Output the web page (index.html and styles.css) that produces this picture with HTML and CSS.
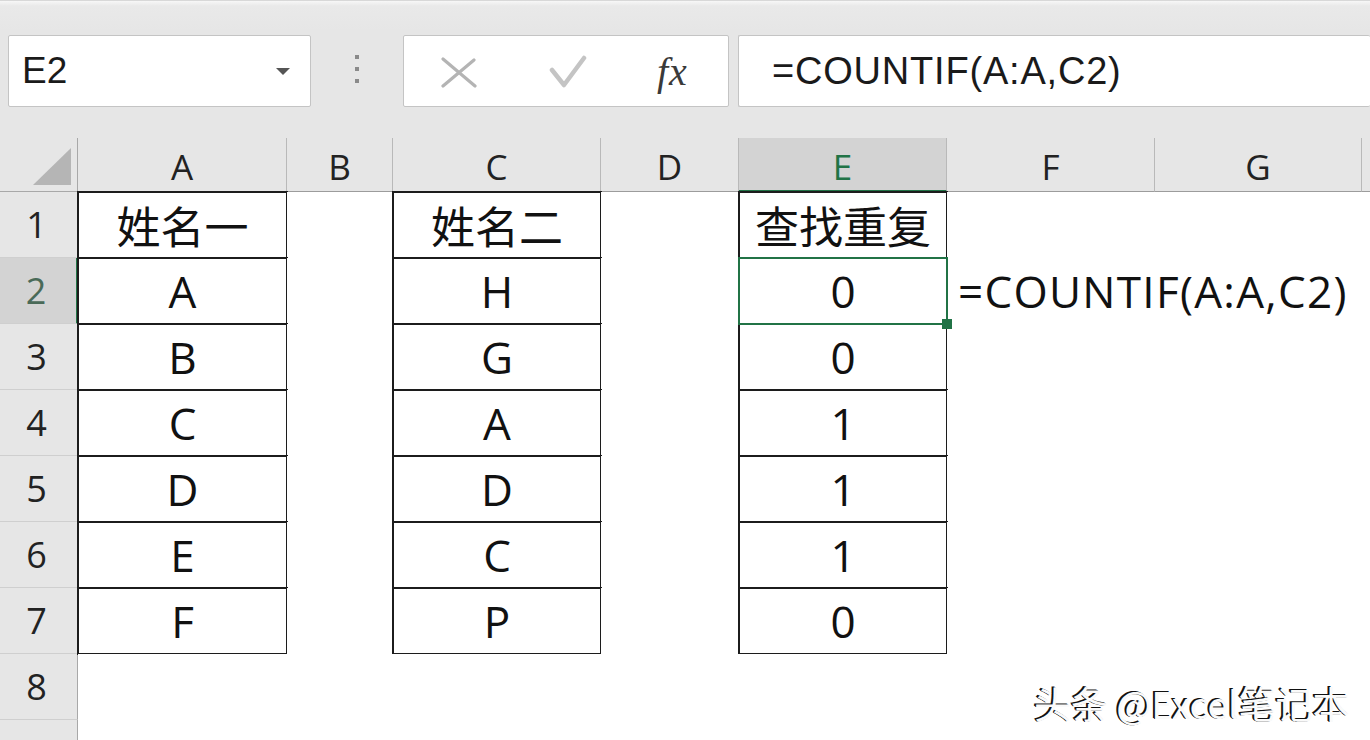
FILE: index.html
```html
<!DOCTYPE html>
<html>
<head>
<meta charset="utf-8">
<link rel="stylesheet" href="styles.css">
</head>
<body>
<div class="toolbar">
  <div class="namebox">
    <span class="name">E2</span>
    <span class="caret"></span>
  </div>
  <div class="grip"><i></i><i></i><i></i></div>
  <div class="buttons">
    <svg class="ico-x" width="36" height="32" viewBox="0 0 36 32"><path d="M2 2 L34 29 M33 3 L2 29" stroke="#b4b4b4" stroke-width="3.2" stroke-linecap="round" fill="none"/></svg>
    <svg class="ico-ok" width="38" height="34" viewBox="0 0 38 34"><path d="M3 15 L15 30 L35 3" stroke="#c4c4c4" stroke-width="4.5" stroke-linecap="round" stroke-linejoin="round" fill="none"/></svg>
    <span class="fx">fx</span>
  </div>
  <div class="formula">=COUNTIF(A:A,C2)</div>
</div>
<div class="sheet">
  <div class="corner"><span class="tri"></span></div>
  <div class="ch">A</div>
  <div class="ch">B</div>
  <div class="ch">C</div>
  <div class="ch">D</div>
  <div class="ch sel">E</div>
  <div class="ch">F</div>
  <div class="ch">G</div>
  <div class="ch last"></div>

  <div class="rh">1</div>
  <div class="c b">姓名一</div><div class="c"></div><div class="c b">姓名二</div><div class="c"></div><div class="c b">查找重复</div><div class="c"></div><div class="c"></div><div class="c"></div>

  <div class="rh sel">2</div>
  <div class="c b">A</div><div class="c"></div><div class="c b">H</div><div class="c"></div><div class="c b active">0<span class="handle"></span></div><div class="c left">=COUNTIF(A:A,C2)</div><div class="c"></div><div class="c"></div>

  <div class="rh">3</div>
  <div class="c b">B</div><div class="c"></div><div class="c b">G</div><div class="c"></div><div class="c b">0</div><div class="c"></div><div class="c"></div><div class="c"></div>

  <div class="rh">4</div>
  <div class="c b">C</div><div class="c"></div><div class="c b">A</div><div class="c"></div><div class="c b">1</div><div class="c"></div><div class="c"></div><div class="c"></div>

  <div class="rh">5</div>
  <div class="c b">D</div><div class="c"></div><div class="c b">D</div><div class="c"></div><div class="c b">1</div><div class="c"></div><div class="c"></div><div class="c"></div>

  <div class="rh">6</div>
  <div class="c b">E</div><div class="c"></div><div class="c b">C</div><div class="c"></div><div class="c b">1</div><div class="c"></div><div class="c"></div><div class="c"></div>

  <div class="rh">7</div>
  <div class="c b">F</div><div class="c"></div><div class="c b">P</div><div class="c"></div><div class="c b">0</div><div class="c"></div><div class="c"></div><div class="c"></div>

  <div class="rh">8</div>
  <div class="c"></div><div class="c"></div><div class="c"></div><div class="c"></div><div class="c"></div><div class="c"></div><div class="c"></div><div class="c"></div>

  <div class="rh"></div>
  <div class="c"></div><div class="c"></div><div class="c"></div><div class="c"></div><div class="c"></div><div class="c"></div><div class="c"></div><div class="c"></div>
</div>
<div class="watermark">头条 @Excel笔记本</div>
</body>
</html>
```
FILE: styles.css
```css
html, body {
  margin: 0;
  padding: 0;
  width: 1370px;
  height: 740px;
  overflow: hidden;
  background: #e6e6e6;
  font-family: "Open Sans", "Noto Sans CJK SC", sans-serif;
  position: relative;
}

.toolbar {
  height: 138px;
  box-sizing: border-box;
  padding-top: 34px;
  padding-left: 8px;
  display: flex;
  align-items: flex-start;
  background: linear-gradient(#f7f7f7 0, #e9e9e9 5px, #e6e6e6 30px);
  border-top: 1px solid #d8d8d8;
}

.namebox, .buttons, .formula {
  height: 72px;
  box-sizing: border-box;
  background: #fff;
  border: 1px solid #c4c4c4;
  border-radius: 2px;
  display: flex;
  align-items: center;
}

.namebox {
  width: 303px;
  padding-left: 13px;
  justify-content: space-between;
  padding-right: 20px;
}

.name {
  font-family: "Liberation Sans", Arial, sans-serif;
  font-size: 37px;
  color: #1a1a1a;
}

.caret {
  width: 0;
  height: 0;
  border-left: 7px solid transparent;
  border-right: 7px solid transparent;
  border-top: 7px solid #555;
}

.grip {
  width: 92px;
  display: flex;
  flex-direction: column;
  align-items: center;
  gap: 8px;
  padding-top: 20px;
}

.grip i {
  display: block;
  width: 4px;
  height: 4px;
  background: #8a8a8a;
}

.buttons {
  width: 326px;
  padding-left: 37px;
}

.ico-x { margin-top: 4px; }
.ico-ok { margin-left: 72px; margin-top: 2px; }

.fx {
  margin-left: 70px;
  font-family: "Liberation Serif", "Times New Roman", serif;
  font-style: italic;
  font-size: 40px;
  color: #3a3a3a;
  letter-spacing: 1px;
}

.formula {
  margin-left: 9px;
  flex: 1;
  border-right: none;
  padding-left: 33px;
  font-family: "Liberation Sans", Arial, sans-serif;
  font-size: 38px;
  letter-spacing: 0.8px;
  color: #1a1a1a;
}

.sheet {
  display: grid;
  grid-template-columns: 78px 209px 106px 208px 138px 208px 208px 207px 8px;
  grid-template-rows: 54px repeat(9, 66px);
  background: #fff;
}

.corner, .ch, .rh {
  background: #e6e6e6;
  box-sizing: border-box;
  display: flex;
  align-items: center;
  justify-content: center;
  color: #222;
}

.corner {
  border-right: 1px solid #a8a8a8;
  border-bottom: 1px solid #a8a8a8;
  justify-content: flex-end;
  align-items: flex-end;
  padding: 0 6px 6px 0;
}

.tri {
  width: 0;
  height: 0;
  border-left: 38px solid transparent;
  border-bottom: 37px solid #b5b5b5;
}

.ch {
  font-size: 35px;
  border-right: 1px solid #b9b9b9;
  border-bottom: 1px solid #9c9c9c;
  padding-top: 4px;
}

.ch.last {
  border-right: none;
}

.ch.sel {
  background: #d3d3d3;
  color: #217346;
  border-bottom: 2px solid #217346;
}

.rh {
  font-size: 36px;
  border-right: 1px solid #a8a8a8;
  border-bottom: 1px solid #cfcfcf;
  padding-right: 4px;
}

.rh.sel {
  background: #d3d3d3;
  color: #4a6a58;
  border-right: 2px solid #217346;
}

.c {
  box-sizing: border-box;
  display: flex;
  align-items: center;
  justify-content: center;
  font-size: 44px;
  color: #111;
  white-space: nowrap;
  position: relative;
  background: #fff;
}

.c.b {
  border: 2px solid #1c1c1c;
  margin: -1px;
}

.c.active {
  border-color: #217346;
  z-index: 2;
}

.c.left {
  justify-content: flex-start;
  padding-left: 11px;
  background: transparent;
  letter-spacing: 1.3px;
  z-index: 3;
}

.handle {
  position: absolute;
  right: -6px;
  bottom: -6px;
  width: 10px;
  height: 10px;
  background: #217346;
}

.watermark {
  position: absolute;
  left: 1034px;
  top: 676px;
  font-family: "Noto Sans CJK SC", "Liberation Sans", sans-serif;
  font-size: 37px;
  color: #fafafa;
  text-shadow: -2px -1px 0 #111, -1px 0 0 #111;
}
```
